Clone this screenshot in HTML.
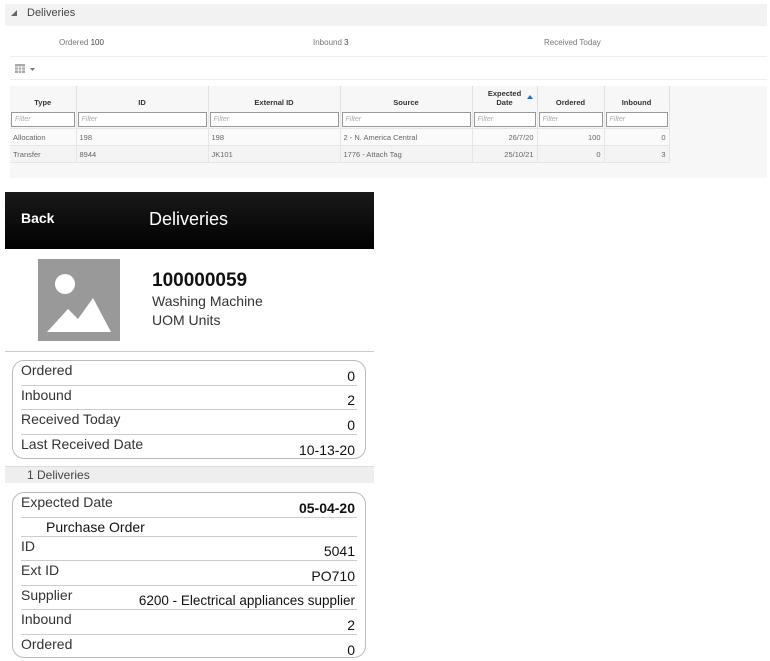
<!DOCTYPE html>
<html><head><style>
*{margin:0;padding:0;box-sizing:border-box}
body{width:770px;height:661px;background:#fff;font-family:"Liberation Sans",sans-serif;position:relative;overflow:hidden}
.a{position:absolute;white-space:nowrap}
.s{font-size:8px;color:#777}
table{border-collapse:collapse;position:absolute;left:10px;top:86px;font-size:7.5px;color:#666}
td{height:17px;border-bottom:1px solid #e6e6e6;border-right:1px solid #e6e6e6;padding:0 3px}
th{height:25px;font-size:7.5px;color:#333;border-right:1px solid #e0e0e0;vertical-align:bottom;padding-bottom:4px}
.f td{padding:1px}
.f div{border:1px solid #999;height:15px;background:#fff;font-style:italic;color:#aaa;padding:3px 3px;font-size:7px}
.r{text-align:right}
.card{position:absolute;left:12px;width:354px;border:1px solid #bbb;border-radius:12px;padding:0 8px}
.row{height:24.5px;border-bottom:1px solid #ccc;position:relative;font-size:14px;color:#333}
.row:last-child{border-bottom:none}
.row .l{position:absolute;left:0;top:1px}
.row .v{position:absolute;right:2px;bottom:1px;color:#111}
</style></head><body>
<div class="a" style="left:5px;top:4px;width:762px;height:22px;background:#f2f2f2"></div>
<div class="a" style="left:11px;top:10px;width:0;height:0;border-left:6px solid transparent;border-bottom:6px solid #666"></div>
<div class="a" style="left:27px;top:7px;font-size:11px;color:#444">Deliveries</div>
<div class="a s" style="left:59px;top:38px">Ordered <span style="color:#444">100</span></div>
<div class="a s" style="left:313px;top:38px">Inbound <span style="color:#444">3</span></div>
<div class="a s" style="left:544px;top:38px">Received Today</div>
<div class="a" style="left:10px;top:56px;width:757px;height:1px;background:#eee"></div>
<svg class="a" style="left:15px;top:64px" width="24" height="10"><rect x="0" y="0" width="10" height="9" fill="#aaa"/><g stroke="#fff" stroke-width="0.8"><line x1="0" y1="3" x2="10" y2="3"/><line x1="0" y1="6" x2="10" y2="6"/><line x1="3.3" y1="2" x2="3.3" y2="9"/><line x1="6.6" y1="2" x2="6.6" y2="9"/></g><path d="M15 4h5l-2.5 3z" fill="#777"/></svg>
<div class="a" style="left:10px;top:79px;width:757px;height:1px;background:#eee"></div>
<div class="a" style="left:10px;top:86px;width:757px;height:92px;background:#f7f7f7"></div>
<table>
<tr><th style="width:66px">Type</th><th style="width:132px">ID</th><th style="width:132px">External ID</th><th style="width:132px">Source</th><th style="width:65px;position:relative">Expected<br>Date<span style="position:absolute;right:4px;top:9px;width:0;height:0;border-left:3px solid transparent;border-right:3px solid transparent;border-bottom:4px solid #1a6fc9"></span></th><th style="width:67px">Ordered</th><th style="width:65px">Inbound</th></tr>
<tr class="f"><td><div>Filter</div></td><td><div>Filter</div></td><td><div>Filter</div></td><td><div>Filter</div></td><td><div>Filter</div></td><td><div>Filter</div></td><td><div>Filter</div></td></tr>
<tr style="background:#fafafa"><td>Allocation</td><td>198</td><td>198</td><td>2 - N. America Central</td><td class="r">26/7/20</td><td class="r">100</td><td class="r">0</td></tr>
<tr style="background:#f4f4f4"><td>Transfer</td><td>8944</td><td>JK101</td><td>1776 - Attach Tag</td><td class="r">25/10/21</td><td class="r">0</td><td class="r">3</td></tr>
</table>
<div class="a" style="left:5px;top:192px;width:369px;height:57px;background:linear-gradient(#1a1a1a,#000)"></div>
<div class="a" style="left:21px;top:210px;font-size:14px;font-weight:bold;color:#fff">Back</div>
<div class="a" style="left:149px;top:209px;font-size:18px;color:#fff">Deliveries</div>
<svg class="a" style="left:38px;top:259px" width="82" height="82"><rect width="82" height="82" fill="#999"/><circle cx="27" cy="25" r="10" fill="#fff"/><path d="M9 73 L30 50 L40 60 L55 39 L73 73 Z" fill="#fff"/></svg>
<div class="a" style="left:152px;top:270px;font-size:19px;font-weight:bold;color:#111">100000059</div>
<div class="a" style="left:152px;top:293px;font-size:14px;color:#333">Washing Machine</div>
<div class="a" style="left:152px;top:312px;font-size:14px;color:#333">UOM Units</div>
<div class="a" style="left:5px;top:351px;width:369px;height:1px;background:#ccc"></div>
<div class="card" style="top:360px;height:99px">
<div class="row"><span class="l">Ordered</span><span class="v">0</span></div>
<div class="row"><span class="l">Inbound</span><span class="v">2</span></div>
<div class="row"><span class="l">Received Today</span><span class="v">0</span></div>
<div class="row"><span class="l">Last Received Date</span><span class="v">10-13-20</span></div>
</div>
<div class="a" style="left:5px;top:466px;width:369px;height:17px;background:#eee;border-top:1px solid #ddd"></div>
<div class="a" style="left:27px;top:468px;font-size:12px;color:#444">1 Deliveries</div>
<div class="card" style="top:492px;height:166px">
<div class="row"><span class="l">Expected Date</span><span class="v" style="font-weight:bold">05-04-20</span></div>
<div class="row" style="height:19px"><span class="l" style="left:25px;top:1px;color:#111">Purchase Order</span></div>
<div class="row"><span class="l">ID</span><span class="v">5041</span></div>
<div class="row"><span class="l">Ext ID</span><span class="v">PO710</span></div>
<div class="row"><span class="l">Supplier</span><span class="v" style="font-size:13.5px">6200 - Electrical appliances supplier</span></div>
<div class="row"><span class="l">Inbound</span><span class="v">2</span></div>
<div class="row"><span class="l">Ordered</span><span class="v">0</span></div>
</div>
</body></html>
